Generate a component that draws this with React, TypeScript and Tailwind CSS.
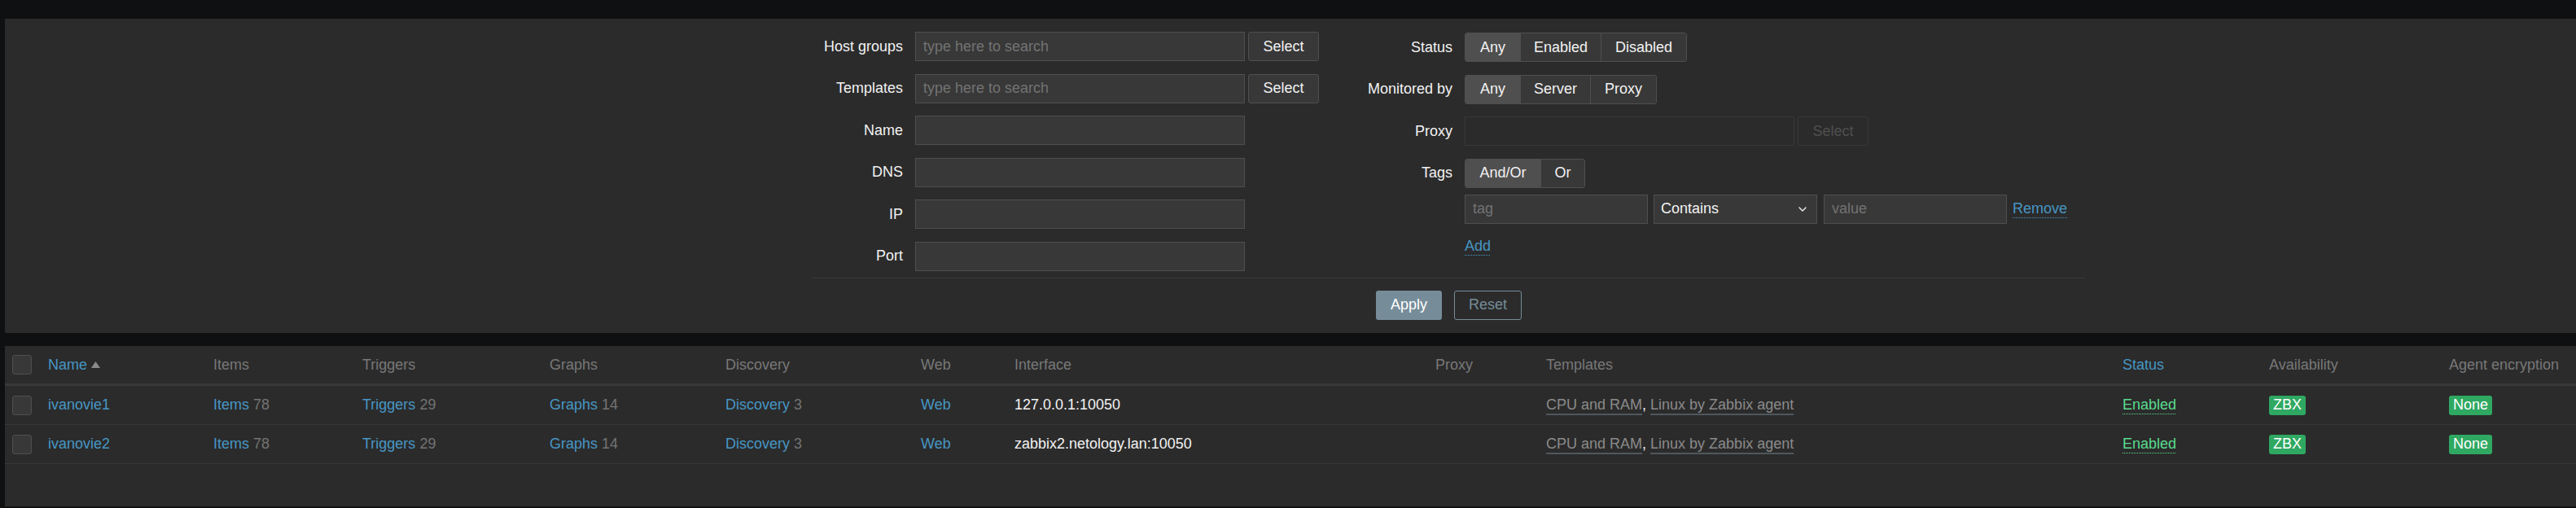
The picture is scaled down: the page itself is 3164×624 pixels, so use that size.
import { ChevronDown } from "lucide-react";

const FONT = "[font-family:'Liberation_Sans',Arial,sans-serif]";

const HOSTS = [
  { name: "ivanovie1", iface: "127.0.0.1:10050" },
  { name: "ivanovie2", iface: "zabbix2.netology.lan:10050" },
];

const COLS =
  "grid grid-cols-[53px_203px_183px_230px_216px_240px_115px_517px_136px_708px_180px_221px_1fr] items-center";

function Label({ children, w }: { children: React.ReactNode; w: string }) {
  return <div className={`${w} shrink-0 text-right text-[#f2f2f2] whitespace-nowrap`}>{children}</div>;
}

function TextInput({ placeholder, w, disabled }: { placeholder?: string; w: string; disabled?: boolean }) {
  return (
    <input
      readOnly
      placeholder={placeholder}
      className={`${w} h-[36px] px-[9px] outline-none text-[18px] placeholder:text-[#737373] ${
        disabled ? "bg-[#2b2b2b] border border-[#383838]" : "bg-[#383838] border border-[#4f4f4f]"
      }`}
    />
  );
}

function SelectBtn({ disabled }: { disabled?: boolean }) {
  return (
    <div
      className={`w-[87px] h-[36px] rounded-[3px] flex items-center justify-center ${
        disabled ? "border border-[#383838] text-[#4f4f4f]" : "bg-[#383838] border border-[#4f4f4f] text-[#f2f2f2]"
      }`}
    >
      Select
    </div>
  );
}

function Radio({ items }: { items: [string, string][] }) {
  return (
    <div className="flex h-[36px] rounded-[3px] border border-[#4f4f4f] overflow-hidden">
      {items.map(([label, w], i) => (
        <div
          key={label}
          className={`${w} flex items-center justify-center text-[#f2f2f2] ${i === 0 ? "bg-[#4f4f4f]" : "bg-[#383838] border-l border-[#4f4f4f]"}`}
        >
          {label}
        </div>
      ))}
    </div>
  );
}

function Checkbox() {
  return <div className="w-[24px] h-[24px] rounded-[3px] bg-[#383838] border border-[#4f4f4f]" />;
}

export default function App() {
  return (
    <div className={`${FONT} text-[18px] bg-[#0e1012] w-[3164px] h-[624px] pt-[23px] pl-[6px] overflow-hidden`}>
      {/* Filter */}
      <div className="h-[386px] bg-[#2b2b2b] pt-[16px]">
        <div className="ml-[991px] w-[1565px]">
          <div className="flex">
            {/* left column */}
            <div className="flex flex-col gap-[15.6px]">
              {[
                ["Host groups", "type here to search", true],
                ["Templates", "type here to search", true],
                ["Name", "", false],
                ["DNS", "", false],
                ["IP", "", false],
                ["Port", "", false],
              ].map(([label, ph, sel]) => (
                <div key={label as string} className="flex items-center h-[36px]">
                  <Label w="w-[112px]">{label}</Label>
                  <div className="ml-[15px]">
                    <TextInput w="w-[405px]" placeholder={(ph as string) || undefined} />
                  </div>
                  {sel ? (
                    <div className="ml-[4px]">
                      <SelectBtn />
                    </div>
                  ) : null}
                </div>
              ))}
            </div>

            {/* right column */}
            <div className="ml-[20px] flex flex-col">
              <div className="flex flex-col gap-[15.6px] pt-[1px]">
                <div className="flex items-center h-[36px]">
                  <Label w="w-[144px]">Status</Label>
                  <div className="ml-[15px]">
                    <Radio items={[["Any", "w-[67px]"], ["Enabled", "w-[99px]"], ["Disabled", "w-[105px]"]]} />
                  </div>
                </div>
                <div className="flex items-center h-[36px]">
                  <Label w="w-[144px]">Monitored by</Label>
                  <div className="ml-[15px]">
                    <Radio items={[["Any", "w-[67px]"], ["Server", "w-[86px]"], ["Proxy", "w-[81px]"]]} />
                  </div>
                </div>
                <div className="flex items-center h-[36px]">
                  <Label w="w-[144px]">Proxy</Label>
                  <div className="ml-[15px]">
                    <TextInput w="w-[405px]" disabled />
                  </div>
                  <div className="ml-[4px]">
                    <SelectBtn disabled />
                  </div>
                </div>
                <div className="flex items-center h-[36px]">
                  <Label w="w-[144px]">Tags</Label>
                  <div className="ml-[15px]">
                    <Radio items={[["And/Or", "w-[92px]"], ["Or", "w-[54px]"]]} />
                  </div>
                </div>
              </div>
              <div className="ml-[159px] mt-[8px] flex items-center h-[36px]">
                <TextInput w="w-[225px]" placeholder="tag" />
                <div className="ml-[7px] w-[201px] h-[36px] bg-[#383838] border border-[#4f4f4f] flex items-center justify-between pl-[8px] pr-[9px] text-[#f2f2f2]">
                  <span>Contains</span>
                  <ChevronDown size={16} strokeWidth={2} className="text-[#f2f2f2]" />
                </div>
                <div className="ml-[8px]">
                  <TextInput w="w-[225px]" placeholder="value" />
                </div>
                <span className="ml-[7px] text-[#4796c4] underline decoration-dotted decoration-1 underline-offset-[5px]">Remove</span>
              </div>
              <div className="ml-[159px] mt-[14px] h-[28px] flex items-center">
                <span className="text-[#4796c4] underline decoration-dotted decoration-1 underline-offset-[5px]">Add</span>
              </div>
            </div>
          </div>

          <div className="mt-[8px] h-px bg-[#383838]" />

          <div className="mt-[15px] flex justify-center gap-[15px]">
            <div className="w-[81px] h-[36px] rounded-[3px] bg-[#768d99] text-white flex items-center justify-center">Apply</div>
            <div className="w-[83px] h-[36px] rounded-[3px] border border-[#768d99] text-[#768d99] flex items-center justify-center">Reset</div>
          </div>
        </div>
      </div>

      {/* Host table */}
      <div className="mt-[16px] h-[197px] bg-[#2b2b2b]">
        <div className={`${COLS} h-[49px] border-b-[3px] border-[#383838] text-[#787878]`}>
          <div className="pl-[9px]">
            <Checkbox />
          </div>
          <div className="flex items-center text-[#4796c4]">
            Name
            <svg width="11" height="8" viewBox="0 0 11 8" className="ml-[5px]">
              <path d="M5.5 0 L11 8 L0 8 Z" fill="#8a8a8a" />
            </svg>
          </div>
          <div>Items</div>
          <div>Triggers</div>
          <div>Graphs</div>
          <div>Discovery</div>
          <div>Web</div>
          <div>Interface</div>
          <div>Proxy</div>
          <div>Templates</div>
          <div className="text-[#4796c4]">Status</div>
          <div>Availability</div>
          <div className="whitespace-nowrap">Agent encryption</div>
        </div>

        {HOSTS.map((h) => (
          <div key={h.name} className={`${COLS} h-[48px] border-b border-[#383838]`}>
            <div className="pl-[9px]">
              <Checkbox />
            </div>
            <div className="text-[#4796c4]">{h.name}</div>
            <div>
              <span className="text-[#4796c4]">Items</span> <span className="text-[#737373]">78</span>
            </div>
            <div>
              <span className="text-[#4796c4]">Triggers</span> <span className="text-[#737373]">29</span>
            </div>
            <div>
              <span className="text-[#4796c4]">Graphs</span> <span className="text-[#737373]">14</span>
            </div>
            <div>
              <span className="text-[#4796c4]">Discovery</span> <span className="text-[#737373]">3</span>
            </div>
            <div className="text-[#4796c4]">Web</div>
            <div className="text-[#f2f2f2] whitespace-nowrap">{h.iface}</div>
            <div />
            <div className="text-[#8a8a8a] whitespace-nowrap">
              <span className="underline decoration-[#4f575c] decoration-2 underline-offset-[5px]">CPU and RAM</span>
              <span className="text-[#f2f2f2]">, </span>
              <span className="underline decoration-[#4f575c] decoration-2 underline-offset-[5px]">Linux by Zabbix agent</span>
            </div>
            <div>
              <span className="text-[#59db8f] underline decoration-dotted decoration-1 underline-offset-[5px]">Enabled</span>
            </div>
            <div>
              <span className="inline-flex items-center h-[24px] px-[5px] rounded-[3px] bg-[#2fa862] text-white">ZBX</span>
            </div>
            <div>
              <span className="inline-flex items-center h-[24px] px-[5px] rounded-[3px] bg-[#2fa862] text-white">None</span>
            </div>
          </div>
        ))}
      </div>
    </div>
  );
}
